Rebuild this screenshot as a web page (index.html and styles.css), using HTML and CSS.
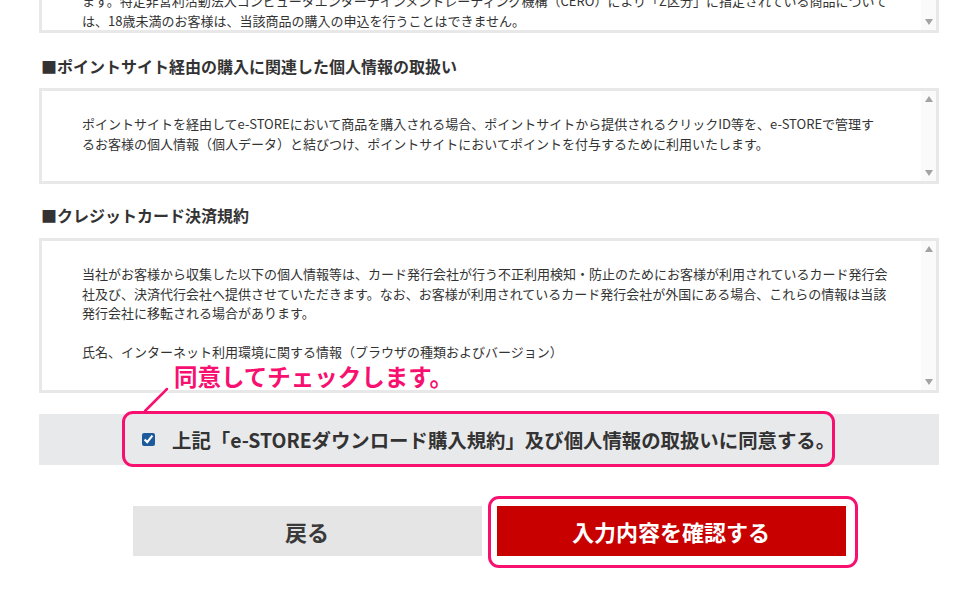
FILE: index.html
```html
<!DOCTYPE html>
<html lang="ja">
<head>
<meta charset="utf-8">
<title>e-STORE 購入規約</title>
<link rel="stylesheet" href="styles.css">
</head>
<body>
<div class="page">
  <div class="tbox cut">
    <div class="tbox-body cut-body">
      <p>ます。特定非営利活動法人コンピュータエンターテインメントレーティング機構（CERO）により「Z区分」に指定されている商品について</p>
      <p>は、18歳未満のお客様は、当該商品の購入の申込を行うことはできません。</p>
    </div>
    <div class="scroll scroll-end"><span class="arr down"></span></div>
  </div>

  <h2 class="head head1">■ポイントサイト経由の購入に関連した個人情報の取扱い</h2>
  <div class="tbox box2">
    <div class="tbox-body">
      <p>ポイントサイトを経由してe-STOREにおいて商品を購入される場合、ポイントサイトから提供されるクリックID等を、e-STOREで管理す</p>
      <p>るお客様の個人情報（個人データ）と結びつけ、ポイントサイトにおいてポイントを付与するために利用いたします。</p>
    </div>
    <div class="scroll"><span class="arr up"></span><span class="arr down"></span></div>
  </div>

  <h2 class="head head2">■クレジットカード決済規約</h2>
  <div class="tbox box3">
    <div class="tbox-body">
      <p>当社がお客様から収集した以下の個人情報等は、カード発行会社が行う不正利用検知・防止のためにお客様が利用されているカード発行会</p>
      <p>社及び、決済代行会社へ提供させていただきます。なお、お客様が利用されているカード発行会社が外国にある場合、これらの情報は当該</p>
      <p>発行会社に移転される場合があります。</p>
      <p class="blank">&nbsp;</p>
      <p>氏名、インターネット利用環境に関する情報（ブラウザの種類およびバージョン）</p>
    </div>
    <div class="scroll"><span class="arr up"></span><span class="arr down"></span></div>
  </div>

  <div class="agree">
    <span class="note">同意してチェックします。</span>
    <svg class="note-line" width="36" height="36" viewBox="0 0 36 36"><line x1="6" y1="30" x2="28" y2="8" stroke="#fff" stroke-width="5" stroke-linecap="round"/><line x1="6" y1="30" x2="28" y2="8" stroke="#f7106f" stroke-width="2.5" stroke-linecap="round"/></svg>
    <label class="agree-label">
      <input type="checkbox" class="chk" checked>
      <span class="agree-text">上記「e-STOREダウンロード購入規約」及び個人情報の取扱いに同意する。</span>
    </label>
  </div>

  <div class="buttons">
    <button class="btn btn-back" type="button">戻る</button>
    <div class="btn-wrap">
      <button class="btn btn-confirm" type="button">入力内容を確認する</button>
    </div>
  </div>
</div>
</body>
</html>
```

FILE: styles.css
```css
html, body {
  margin: 0;
  padding: 0;
  background: #fff;
}
body {
  font-family: "Noto Sans CJK JP", "Noto Sans", sans-serif;
  color: #333;
}
.page {
  width: 900px;
  margin-left: 39px;
  padding-bottom: 60px;
}
p {
  margin: 0;
}
.tbox {
  border: 3px solid #e8e8e8;
  background: #fff;
  display: flex;
  overflow: hidden;
}
.tbox.cut {
  border-top: 0;
  height: 30px;
}
.box2 { height: 90px; }
.box3 { height: 149px; }
.tbox-body {
  flex: 1;
  padding: 23px 0 0 40px;
  font-size: 13px;
  line-height: 19.5px;
  color: #333;
  white-space: nowrap;
  overflow: hidden;
}
.cut-body {
  padding-top: 0;
  margin-top: -9px;
}
.scroll {
  width: 15px;
  flex: none;
  background: #fafafa;
  display: flex;
  flex-direction: column;
  justify-content: space-between;
  align-items: center;
  padding: 5px 0;
  box-sizing: border-box;
}
.scroll-end {
  justify-content: flex-end;
}
.arr {
  display: block;
  width: 0;
  height: 0;
  border-left: 4.5px solid transparent;
  border-right: 4.5px solid transparent;
}
.arr.up { border-bottom: 6px solid #a3a3a3; }
.arr.down { border-top: 6px solid #a3a3a3; }

.head {
  font-size: 16px;
  font-weight: bold;
  line-height: 24px;
  color: #333;
  margin: 0 0 0 2px;
}
.head1 { margin-top: 21px; margin-bottom: 10px; }
.head2 { margin-top: 19px; margin-bottom: 11px; }

.agree {
  position: relative;
  margin-top: 21px;
  height: 51px;
  background: #e8e9eb;
  display: flex;
  align-items: center;
  padding-left: 103px;
}
.note {
  position: absolute;
  left: 135px;
  top: -52px;
  font-size: 23.5px;
  line-height: 28px;
  font-weight: bold;
  color: #f7106f;
  white-space: nowrap;
  text-shadow: 0 0 2px #fff, 1px 1px 0 #fff, -1px -1px 0 #fff, 1px -1px 0 #fff, -1px 1px 0 #fff;
}
.note-line {
  position: absolute;
  left: 100px;
  top: -33px;
}
.agree-label {
  position: relative;
  display: flex;
  align-items: center;
  height: 24px;
}
.agree-label::after {
  content: "";
  position: absolute;
  left: -20px;
  right: 0;
  top: -17px;
  bottom: -15px;
  border: 3px solid #f7106f;
  border-radius: 11px;
  pointer-events: none;
}
.chk {
  width: 13px;
  height: 13px;
  margin: 0 17px 0 0;
  accent-color: #1d5a9c;
}
.agree-text {
  font-size: 19.4px;
  font-weight: bold;
  color: #333;
  white-space: nowrap;
  line-height: 24px;
}

.buttons {
  margin-top: 41px;
  display: flex;
  justify-content: center;
  gap: 15px;
}
.btn {
  width: 349px;
  height: 50px;
  border: 0;
  padding: 0;
  font-family: "Noto Sans CJK JP", "Noto Sans", sans-serif;
  font-size: 22px;
  font-weight: bold;
}
.btn-back {
  background: #e5e5e5;
  color: #3a3a3a;
}
.btn-wrap {
  position: relative;
  display: flex;
}
.btn-wrap::after {
  content: "";
  position: absolute;
  left: -9px;
  right: -12px;
  top: -10px;
  bottom: -12px;
  border: 3px solid #f7106f;
  border-radius: 11px;
  pointer-events: none;
}
.btn-confirm {
  background: #c80000;
  color: #fff;
}
```
